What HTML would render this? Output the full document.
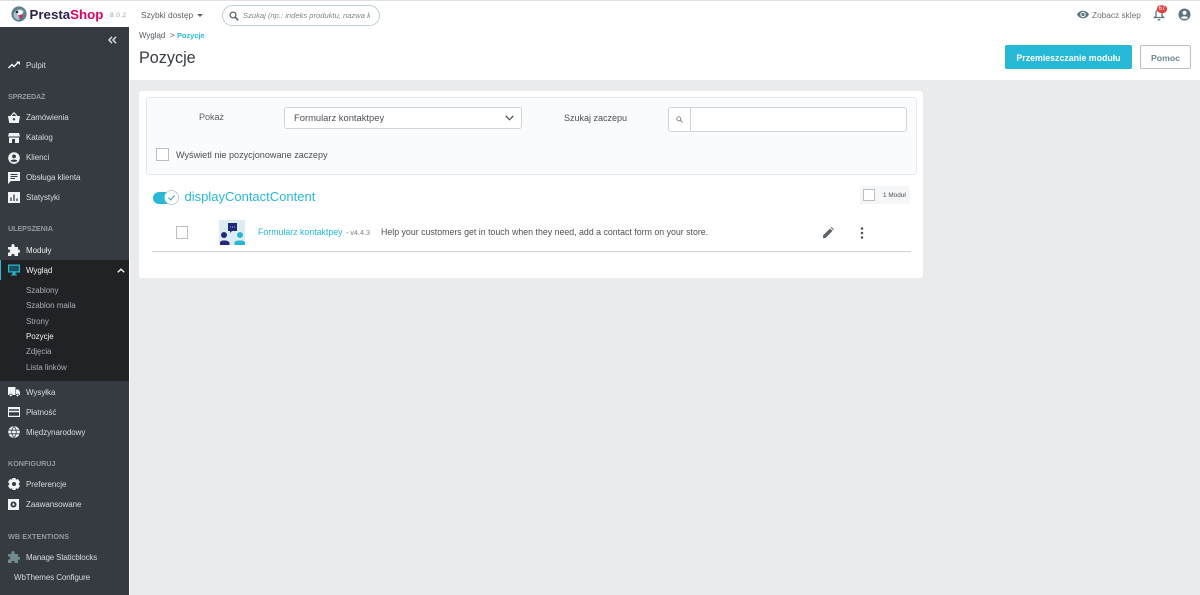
<!DOCTYPE html>
<html lang="pl"><head><meta charset="utf-8"><title>Pozycje</title>
<style>
html,body{margin:0;padding:0}
body{width:1200px;height:595px;overflow:hidden;position:relative;background:#eaebec;font-family:"Liberation Sans",sans-serif;color:#363a41;-webkit-font-smoothing:antialiased}
.a{position:absolute;white-space:nowrap;line-height:14px}
.box{position:absolute;box-sizing:border-box}
.m{font-size:8px;color:#d7dadc;left:26px;letter-spacing:-.05px;line-height:12px;margin-top:1px;position:absolute;white-space:nowrap}
.sub{color:#a8adb1;font-size:8px;left:26px;letter-spacing:-.05px;line-height:12px;margin-top:1px;position:absolute;white-space:nowrap}
.h{font-size:7.2px;font-weight:bold;color:#9399a0;left:8px;line-height:12px;position:absolute;white-space:nowrap}
svg{position:absolute;overflow:visible}
</style></head><body>
<!-- header -->
<div class="box" style="left:0;top:0;width:1200px;height:27px;background:#fff;border-top:1px solid #dfe1e3"></div>
<div class="box" style="left:130px;top:27px;width:1070px;height:53px;background:#fff"></div>
<!-- logo -->
<svg style="left:11px;top:6px" width="16" height="16" viewBox="0 0 16 16"><circle cx="8" cy="8" r="7.6" fill="#5e7f8c"/><path d="M2.5 9C3 4.500 7 2.500 11 3.500L13.500 6 9 7 8 14C5 14 3 12 2.500 9Z" fill="#a9c3cc"/><circle cx="9" cy="7" r="2.800" fill="#fff"/><path d="M7 9.500L12 8 10.500 13Z" fill="#df1f5a"/><circle cx="6" cy="6" r="1.300" fill="#26303a"/></svg>
<div class="a" style="left:29.500px;top:6px;font-size:13.300px;font-weight:bold;line-height:17px;color:#2d1f4e">Presta<span style="color:#df0067">Shop</span></div>
<div class="a" style="left:110px;top:10px;font-size:6.500px;color:#9aa0a5;letter-spacing:.4px;line-height:12px">8.0.2</div>
<div class="a" style="left:141px;top:8px;font-size:8.400px;color:#5b6168">Szybki dostęp</div>
<div class="box" style="left:197px;top:14px;border:3px solid transparent;border-top:3px solid #5b6168;border-bottom:0"></div>
<div class="box" style="left:222px;top:5px;width:158px;height:21px;border:1px solid #bcd0d6;border-radius:11px;background:#fff"></div>
<svg style="left:229px;top:11px" width="10" height="10" viewBox="0 0 10 10"><circle cx="4" cy="4" r="2.900" fill="none" stroke="#5b6168" stroke-width="1.300"/><path d="M6.200 6.200L9.300 9.300" stroke="#5b6168" stroke-width="1.500"/></svg>
<div class="a" style="left:243px;top:9px;width:127px;overflow:hidden;font-size:7.600px;font-style:italic;color:#80868b">Szukaj (np.: indeks produktu, nazwa k</div>
<svg style="left:1077px;top:10px" width="12" height="9" viewBox="0 0 12 9"><path d="M0 4.500C2.500-.5 9.500-.5 12 4.500 9.500 9.500 2.500 9.500 0 4.500Z" fill="#5b7480"/><circle cx="6" cy="4.500" r="2.700" fill="#fff"/><circle cx="6" cy="4.500" r="1.600" fill="#5b7480"/></svg>
<div class="a" style="left:1092px;top:8px;font-size:8.300px;color:#6c7278">Zobacz sklep</div>
<svg style="left:1153px;top:8px" width="12" height="13" viewBox="0 0 12 13"><path d="M1.500 9.500L3 8V5C3 2.800 4.300 1.500 6 1.500S9 2.800 9 5V8L10.500 9.500Z" fill="none" stroke="#5b7480" stroke-width="1.300"/><path d="M4.800 11H7.200V12.500H4.800Z" fill="#5b7480"/></svg>
<div class="box" style="left:1157px;top:5px;width:10px;height:8px;border-radius:4px;background:#e2403c;color:#fff;font-size:6px;line-height:8px;text-align:center">67</div>
<svg style="left:1178px;top:8px" width="13" height="13" viewBox="0 0 13 13"><circle cx="6.500" cy="6.500" r="6" fill="#5b7480"/><circle cx="6.500" cy="4.800" r="2" fill="#fff"/><path d="M2.800 9.800C4 7.800 9 7.800 10.200 9.800 9 11.300 4 11.300 2.800 9.800Z" fill="#fff"/></svg>

<!-- sidebar -->
<div class="box" style="left:0;top:27px;width:129px;height:568px;background:#363a41"></div>
<div class="box" style="left:129px;top:27px;width:1px;height:568px;background:#fff"></div>
<div class="box" style="left:0;top:260px;width:129px;height:121px;background:#202226"></div>
<div class="box" style="left:0;top:260px;width:1px;height:20px;background:#25b9d7"></div>
<svg style="left:108px;top:36px" width="9" height="8" viewBox="0 0 9 8"><path d="M4 .8L1 4 4 7.200M8 .8L5 4 8 7.200" fill="none" stroke="#e4e6e7" stroke-width="1.400"/></svg>

<svg style="left:8px;top:61px" width="12" height="8" viewBox="0 0 12 8"><path d="M.5 7L4 3.500 6 5.500 10.500 1" fill="none" stroke="#f2f3f4" stroke-width="1.500"/><path d="M8 .5H12V4Z" fill="#f2f3f4"/></svg>
<div class="m" style="top:59px">Pulpit</div>

<div class="h" style="top:91px;letter-spacing:-.2px">SPRZEDAŻ</div>
<svg style="left:8px;top:112px" width="12" height="11" viewBox="0 0 12 11"><path d="M0 4H12L10.800 11H1.200Z" fill="#f2f3f4"/><path d="M3 4L6 .7 9 4" fill="none" stroke="#f2f3f4" stroke-width="1.100"/><circle cx="6" cy="7.300" r="1.200" fill="#363a41"/></svg>
<div class="m" style="top:111px">Zamówienia</div>
<svg style="left:8px;top:133px" width="12" height="10" viewBox="0 0 12 10"><path d="M1 0H11L12 3.500H0Z" fill="#f2f3f4"/><path d="M1 4.500H11V10H7V6H4V10H1Z" fill="#f2f3f4"/></svg>
<div class="m" style="top:131px">Katalog</div>
<svg style="left:8px;top:152px" width="12" height="12" viewBox="0 0 12 12"><circle cx="6" cy="6" r="5.800" fill="#f2f3f4"/><circle cx="6" cy="4.400" r="1.900" fill="#363a41"/><path d="M2.500 9C3.500 7 8.500 7 9.500 9 8.500 10.200 3.500 10.200 2.500 9Z" fill="#363a41"/></svg>
<div class="m" style="top:151px">Klienci</div>
<svg style="left:8px;top:172px" width="12" height="12" viewBox="0 0 12 12"><path d="M0 0H12V9H3L0 12Z" fill="#f2f3f4"/><path d="M2.500 2.500H9.500M2.500 4.500H9.500M2.500 6.500H7" stroke="#363a41" stroke-width=".9"/></svg>
<div class="m" style="top:171px">Obsługa klienta</div>
<svg style="left:8px;top:192px" width="12" height="11" viewBox="0 0 12 11"><path d="M0 0H12V11H0Z" fill="#f2f3f4"/><path d="M3 5.500V9M6 2.500V9M9 6.500V9" stroke="#363a41" stroke-width="1.300"/></svg>
<div class="m" style="top:191px">Statystyki</div>

<div class="h" style="top:223px;letter-spacing:-.07px">ULEPSZENIA</div>
<svg style="left:8px;top:244px" width="12" height="12" viewBox="0 0 12 12"><path d="M0 3H3.500C3 1 4 0 5 0S7 1 6.500 3H10V5.800C11.500 5.300 12 6.300 12 7.300S11.500 9.300 10 8.800V12H6.500C7 10.500 6 10 5 10S3 10.500 3.500 12H0V8.500C1.500 9 2 8 2 7S1.500 5 0 5.500Z" fill="#f2f3f4"/></svg>
<div class="m" style="top:244px;color:#e9ebec">Moduły</div>
<svg style="left:8px;top:264px" width="12" height="12" viewBox="0 0 12 12"><path d="M0 .5H12V8.500H0Z" fill="#25b9d7"/><path d="M1.200 1.700H10.800V7.300H1.200Z" fill="#1c4f5c"/><path d="M4.500 8.500H7.500V10.500H9V11.500H3V10.500H4.500Z" fill="#25b9d7"/></svg>
<div class="m" style="top:264px;color:#eef0f1">Wygląd</div>
<svg style="left:117px;top:268px" width="8" height="5" viewBox="0 0 8 5"><path d="M.8 4.300L4 1.200 7.200 4.300" fill="none" stroke="#f2f3f4" stroke-width="1.400"/></svg>
<div class="sub" style="top:284px">Szablony</div>
<div class="sub" style="top:299px">Szablon maila</div>
<div class="sub" style="top:315px">Strony</div>
<div class="sub" style="top:330px;color:#f0f1f2">Pozycje</div>
<div class="sub" style="top:345px">Zdjęcia</div>
<div class="sub" style="top:361px">Lista linków</div>

<svg style="left:8px;top:387px" width="12" height="10" viewBox="0 0 12 10"><path d="M0 0H7.500V8H0Z" fill="#f2f3f4"/><path d="M8 2.500H10.500L12 5V8H8Z" fill="#f2f3f4"/><circle cx="2.800" cy="8.300" r="1.400" fill="#f2f3f4" stroke="#363a41" stroke-width=".6"/><circle cx="9.500" cy="8.300" r="1.400" fill="#f2f3f4" stroke="#363a41" stroke-width=".6"/></svg>
<div class="m" style="top:386px">Wysyłka</div>
<svg style="left:8px;top:407px" width="12" height="10" viewBox="0 0 12 10"><path d="M0 0H12V10H0Z" fill="#f2f3f4"/><path d="M1 2.200H11V3.700H1ZM1 5.300H11V8.800H1Z" fill="#363a41"/></svg>
<div class="m" style="top:406px">Płatność</div>
<svg style="left:8px;top:426px" width="12" height="12" viewBox="0 0 12 12"><circle cx="6" cy="6" r="5.800" fill="#f2f3f4"/><path d="M.5 4.200H11.500M.5 7.800H11.500M6 .5C3 3.500 3 8.500 6 11.500 9 8.500 9 3.500 6 .5Z" fill="none" stroke="#363a41" stroke-width=".8"/></svg>
<div class="m" style="top:426px">Międzynarodowy</div>

<div class="h" style="top:458px">KONFIGURUJ</div>
<svg style="left:8px;top:478px" width="12" height="12" viewBox="0 0 12 12"><path d="M4.500 0H7.500L8 1.800 9.800 1 12 4 10.500 6 12 8 9.800 11 8 10.200 7.500 12H4.500L4 10.200 2.200 11 0 8 1.500 6 0 4 2.200 1 4 1.800Z" fill="#f2f3f4"/><circle cx="6" cy="6" r="2" fill="#363a41"/></svg>
<div class="m" style="top:478px">Preferencje</div>
<svg style="left:8px;top:499px" width="11" height="11" viewBox="0 0 11 11"><path d="M0 0H11V11H0Z" fill="#f2f3f4"/><circle cx="5.500" cy="5.500" r="3" fill="#363a41"/><circle cx="5.500" cy="5.500" r="1.200" fill="#f2f3f4"/></svg>
<div class="m" style="top:498px">Zaawansowane</div>

<div class="h" style="top:531px;letter-spacing:.1px">WB EXTENTIONS</div>
<svg style="left:8px;top:551px" width="12" height="12" viewBox="0 0 12 12"><path d="M0 3H3.500C3 1 4 0 5 0S7 1 6.500 3H10V5.800C11.500 5.300 12 6.300 12 7.300S11.500 9.300 10 8.800V12H6.500C7 10.500 6 10 5 10S3 10.500 3.500 12H0V8.500C1.500 9 2 8 2 7S1.500 5 0 5.500Z" fill="#6f8c8f"/></svg>
<div class="m" style="top:551px;letter-spacing:-.14px">Manage Staticblocks</div>
<div class="m" style="top:571px;left:14px;letter-spacing:-.1px">WbThemes Configure</div>

<!-- page head -->
<div class="a" style="left:139px;top:29px;font-size:7.900px;color:#555b61">Wygląd</div>
<div class="a" style="left:170px;top:29px;font-size:7.900px;color:#555b61">&gt;</div>
<div class="a" style="left:177px;top:29px;font-size:7.400px;color:#25b9d7;font-weight:bold">Pozycje</div>
<div class="a" style="left:139px;top:47px;font-size:16.200px;line-height:22px;color:#363a41">Pozycje</div>
<div class="box" style="left:1005px;top:45px;width:127px;height:24px;background:#25b9d7;border-radius:2px;color:#fff;font-size:8.800px;font-weight:bold;line-height:26px;text-align:center">Przemieszczanie modułu</div>
<div class="box" style="left:1140px;top:45px;width:51px;height:24px;background:#fff;border:1px solid #b9bfc3;border-radius:2px;color:#6c868e;font-size:8.700px;font-weight:bold;line-height:24px;text-align:center">Pomoc</div>

<!-- card -->
<div class="box" style="left:139px;top:91px;width:784px;height:187px;background:#fff;border-radius:3px"></div>
<div class="box" style="left:146px;top:97px;width:771px;height:78px;background:#fafbfc;border:1px solid #e6e9eb;border-radius:3px"></div>
<div class="a" style="left:199px;top:110px;font-size:9px;color:#5a6066">Pokaż</div>
<div class="box" style="left:284px;top:107px;width:238px;height:22px;background:#fff;border:1px solid #cfd5d9;border-radius:3px"></div>
<div class="a" style="left:294px;top:111px;font-size:9.400px;color:#4b5157">Formularz kontaktpey</div>
<svg style="left:505px;top:115px" width="9" height="6" viewBox="0 0 9 6"><path d="M.7.8L4.500 4.800 8.300.8" fill="none" stroke="#4b5157" stroke-width="1.200"/></svg>
<div class="a" style="left:564px;top:111px;font-size:9px;color:#4b5157">Szukaj zaczepu</div>
<div class="box" style="left:668px;top:107px;width:239px;height:25px;background:#fff;border:1px solid #cfd5d9;border-radius:3px"></div>
<div class="box" style="left:690px;top:108px;width:1px;height:23px;background:#cfd5d9"></div>
<svg style="left:676px;top:116px" width="7" height="7" viewBox="0 0 7 7"><circle cx="2.800" cy="2.800" r="2" fill="none" stroke="#7a8287" stroke-width=".9"/><path d="M4.300 4.300L6.500 6.500" stroke="#7a8287"/></svg>
<div class="box" style="left:156px;top:148px;width:13px;height:13px;background:#fff;border:1px solid #b9bfc3"></div>
<div class="a" style="left:176px;top:148px;font-size:9.100px;color:#4b5157">Wyświetl nie pozycjonowane zaczepy</div>

<!-- hook -->
<div class="box" style="left:153px;top:192px;width:20px;height:12px;background:#25b9d7;border-radius:6px"></div>
<svg style="left:164px;top:190px" width="15" height="15" viewBox="0 0 15 15"><circle cx="7.500" cy="7.500" r="7" fill="#fff" stroke="#b5c4cb" stroke-width=".8"/><path d="M4.500 7.800L6.700 10 10.700 5.300" fill="none" stroke="#3fa6bd" stroke-width="1.100"/></svg>
<div class="a" style="left:184.500px;top:188px;font-size:13px;line-height:17px;color:#25b9d7">displayContactContent</div>
<div class="box" style="left:860px;top:186px;width:50px;height:18px;background:#f5f6f7;border-radius:2px"></div>
<div class="box" style="left:863px;top:189px;width:12px;height:12px;background:#fff;border:1px solid #b9bfc3"></div>
<div class="a" style="left:883px;top:189px;font-size:6.400px;color:#4b5157">1 Moduł</div>

<!-- module row -->
<div class="box" style="left:176px;top:226px;width:12px;height:13px;background:#fff;border:1px solid #b9bfc3"></div>
<svg style="left:219px;top:220px" width="26" height="25" viewBox="0 0 26 25"><rect width="26" height="25" fill="#dcedf4"/><path d="M9 3H18V11H13L11 13V11H9Z" fill="#25287f"/><path d="M11 7H16" stroke="#7fd0e2" stroke-width="1" stroke-dasharray="1 1"/><circle cx="5" cy="15" r="3" fill="#25287f"/><path d="M1 25V23C1 21.500 2 20.500 5 20.500S10.500 21.500 10.500 23V25Z" fill="#25287f"/><circle cx="21" cy="15" r="3" fill="#29b6cf"/><path d="M15.500 25V23C15.500 21.500 17 20.500 21 20.500S26 21.500 26 23V25Z" fill="#29b6cf"/></svg>
<div class="a" style="left:258px;top:225px;font-size:8.800px;color:#25b9d7">Formularz kontaktpey</div>
<div class="a" style="left:346px;top:226px;font-size:7.200px;color:#7c8287">- v4.4.3</div>
<div class="a" style="left:381px;top:225px;font-size:8.800px;color:#4b5157">Help your customers get in touch when they need, add a contact form on your store.</div>
<svg style="left:823px;top:227px" width="11" height="11" viewBox="0 0 11 11"><path d="M0 11V8.500L7 1.500 9.500 4 2.500 11ZM7.800.7L8.500 0 11 2.500 10.300 3.200Z" fill="#5c6369"/></svg>
<svg style="left:860px;top:227px" width="4" height="12" viewBox="0 0 4 12"><circle cx="2" cy="1.500" r="1.250" fill="#4d5359"/><circle cx="2" cy="6" r="1.250" fill="#4d5359"/><circle cx="2" cy="10.500" r="1.250" fill="#4d5359"/></svg>
<div class="box" style="left:152px;top:251px;width:759px;height:1px;background:#cfd3d6"></div>
</body></html>
